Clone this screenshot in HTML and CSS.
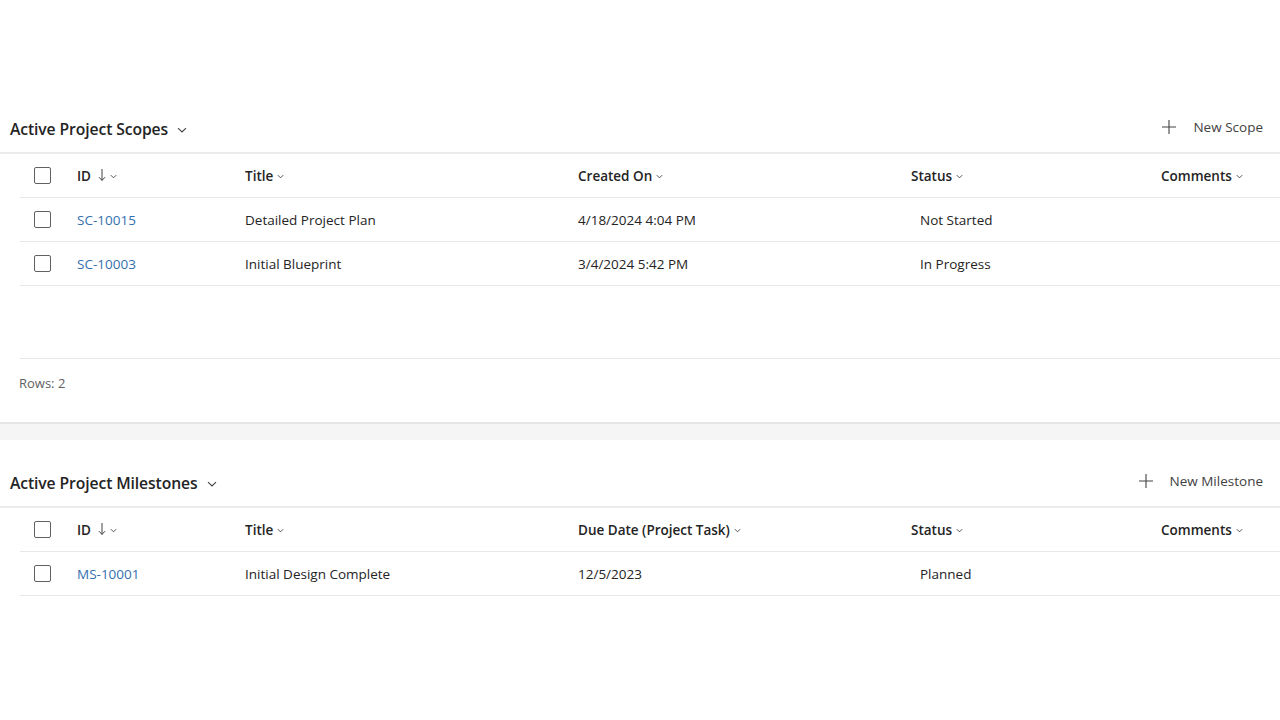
FILE: index.html
```html
<!DOCTYPE html>
<html>
<head>
<meta charset="utf-8">
<link rel="stylesheet" href="styles.css">
</head>
<body>
<div class="page">
  <section class="card first">
    <div class="card-head">
      <div class="card-title">Active Project Scopes <svg class="title-chev" viewBox="0 0 12 12" width="12" height="12"><path d="M2 4.2 6 8 10 4.2" fill="none" stroke="#424242" stroke-width="1.1"/></svg></div>
      <div class="new-btn"><svg viewBox="0 0 16 16" width="16" height="16"><path d="M8 1v14M1 8h14" stroke="#424242" stroke-width="1.1"/></svg><span>New Scope</span></div>
    </div>
    <div class="grid">
      <div class="row head">
        <div class="cell chk"><span class="box"></span></div>
        <div class="cell">ID <svg class="arrow" viewBox="0 0 8 14" width="8" height="14"><path d="M4 1v11.5M1 9.2 4 12.4 7 9.2" fill="none" stroke="#424242" stroke-width="1"/></svg><svg class="chev" viewBox="0 0 10 10" width="9" height="9"><path d="M2 3.5 5 6.5 8 3.5" fill="none" stroke="#424242" stroke-width="1"/></svg></div>
        <div class="cell">Title<svg class="chev" viewBox="0 0 10 10" width="9" height="9"><path d="M2 3.5 5 6.5 8 3.5" fill="none" stroke="#424242" stroke-width="1"/></svg></div>
        <div class="cell">Created On<svg class="chev" viewBox="0 0 10 10" width="9" height="9"><path d="M2 3.5 5 6.5 8 3.5" fill="none" stroke="#424242" stroke-width="1"/></svg></div>
        <div class="cell">Status<svg class="chev" viewBox="0 0 10 10" width="9" height="9"><path d="M2 3.5 5 6.5 8 3.5" fill="none" stroke="#424242" stroke-width="1"/></svg></div>
        <div class="cell">Comments<svg class="chev" viewBox="0 0 10 10" width="9" height="9"><path d="M2 3.5 5 6.5 8 3.5" fill="none" stroke="#424242" stroke-width="1"/></svg></div>
      </div>
      <div class="row">
        <div class="cell chk"><span class="box"></span></div>
        <div class="cell link">SC-10015</div>
        <div class="cell">Detailed Project Plan</div>
        <div class="cell">4/18/2024 4:04 PM</div>
        <div class="cell status">Not Started</div>
        <div class="cell"></div>
      </div>
      <div class="row">
        <div class="cell chk"><span class="box"></span></div>
        <div class="cell link">SC-10003</div>
        <div class="cell">Initial Blueprint</div>
        <div class="cell">3/4/2024 5:42 PM</div>
        <div class="cell status">In Progress</div>
        <div class="cell"></div>
      </div>
    </div>
    <div class="empty"></div>
    <div class="footer">Rows: 2</div>
  </section>
  <div class="band"></div>
  <section class="card">
    <div class="card-head">
      <div class="card-title">Active Project Milestones <svg class="title-chev" viewBox="0 0 12 12" width="12" height="12"><path d="M2 4.2 6 8 10 4.2" fill="none" stroke="#424242" stroke-width="1.1"/></svg></div>
      <div class="new-btn"><svg viewBox="0 0 16 16" width="16" height="16"><path d="M8 1v14M1 8h14" stroke="#424242" stroke-width="1.1"/></svg><span>New Milestone</span></div>
    </div>
    <div class="grid">
      <div class="row head">
        <div class="cell chk"><span class="box"></span></div>
        <div class="cell">ID <svg class="arrow" viewBox="0 0 8 14" width="8" height="14"><path d="M4 1v11.5M1 9.2 4 12.4 7 9.2" fill="none" stroke="#424242" stroke-width="1"/></svg><svg class="chev" viewBox="0 0 10 10" width="9" height="9"><path d="M2 3.5 5 6.5 8 3.5" fill="none" stroke="#424242" stroke-width="1"/></svg></div>
        <div class="cell">Title<svg class="chev" viewBox="0 0 10 10" width="9" height="9"><path d="M2 3.5 5 6.5 8 3.5" fill="none" stroke="#424242" stroke-width="1"/></svg></div>
        <div class="cell">Due Date (Project Task)<svg class="chev" viewBox="0 0 10 10" width="9" height="9"><path d="M2 3.5 5 6.5 8 3.5" fill="none" stroke="#424242" stroke-width="1"/></svg></div>
        <div class="cell">Status<svg class="chev" viewBox="0 0 10 10" width="9" height="9"><path d="M2 3.5 5 6.5 8 3.5" fill="none" stroke="#424242" stroke-width="1"/></svg></div>
        <div class="cell">Comments<svg class="chev" viewBox="0 0 10 10" width="9" height="9"><path d="M2 3.5 5 6.5 8 3.5" fill="none" stroke="#424242" stroke-width="1"/></svg></div>
      </div>
      <div class="row">
        <div class="cell chk"><span class="box"></span></div>
        <div class="cell link">MS-10001</div>
        <div class="cell">Initial Design Complete</div>
        <div class="cell">12/5/2023</div>
        <div class="cell status">Planned</div>
        <div class="cell"></div>
      </div>
    </div>
  </section>
</div>
</body>
</html>
```
FILE: styles.css
```css
* { box-sizing: border-box; }
html, body { margin: 0; padding: 0; background: #fff; }
body {
  font-family: "Open Sans", "Noto Sans", sans-serif;
  font-size: 13.5px;
  color: #242424;
  width: 1280px;
  height: 720px;
  overflow: hidden;
}
.page { padding-top: 86px; }
.card { background: #fff; }
.card.first { border-bottom: 2px solid #e6e6e6; }
.card-head {
  height: 68px;
  display: flex;
  align-items: flex-start;
  justify-content: space-between;
  padding: 32px 17px 0 10px;
  border-bottom: 2px solid #ececec;
}
.card-title {
  font-size: 15.7px;
  font-weight: 600;
  color: #242424;
  display: flex;
  align-items: center;
  gap: 8px;
  letter-spacing: -0.1px;
}
.title-chev { margin-top: 2px; }
.new-btn {
  display: flex;
  align-items: center;
  gap: 16px;
  font-size: 13.5px;
  color: #424242;
}
.grid { padding-left: 20px; }
.row {
  display: grid;
  grid-template-columns: 45px 168px 333px 333px 250px 1fr;
  height: 44px;
  border-bottom: 1px solid #e8e8e8;
  align-items: center;
}
.row.head {
  font-weight: 600;
}
.cell {
  padding-left: 12px;
  display: flex;
  align-items: center;
  white-space: nowrap;
}
.cell.chk { padding-left: 14px; }
.box {
  width: 17px;
  height: 17px;
  border: 1px solid #616161;
  border-radius: 2px;
  background: #fff;
}
.arrow {
  margin-left: 7px;
  margin-top: -1px;
}
.chev { margin-left: 3px; margin-top: 1px; }
.link { color: #3470ad; }
.status { padding-left: 21px; }
.empty {
  height: 73px;
  margin-left: 20px;
  border-bottom: 1px solid #e8e8e8;
}
.footer {
  height: 63px;
  padding: 15px 0 0 19px;
  font-size: 13px;
  color: #616161;
}
.band {
  height: 16px;
  background: #f5f5f5;
}
```
